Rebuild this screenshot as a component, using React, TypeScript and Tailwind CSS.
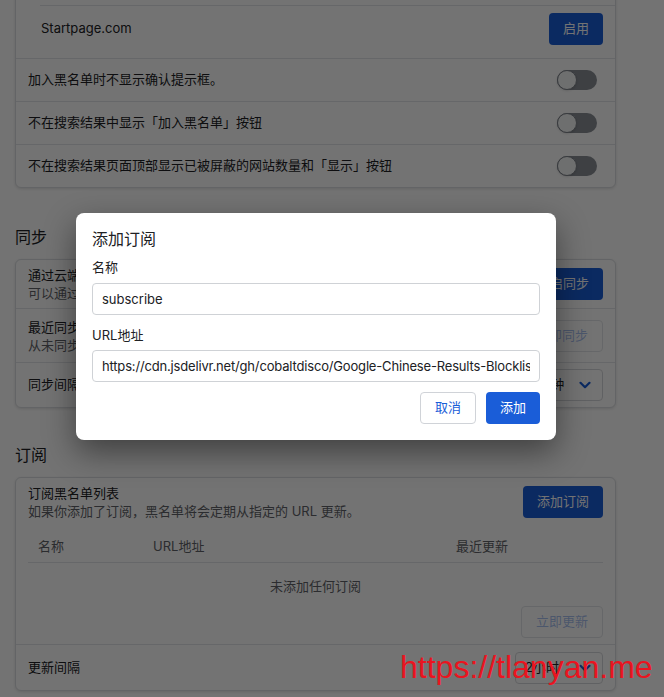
import clsx from "clsx";
import type { ReactNode } from "react";

const BLUE = "bg-[#1a5dd8]";

function Button({
  children,
  variant = "primary",
  className,
}: {
  children: ReactNode;
  variant?: "primary" | "outline" | "disabled";
  className?: string;
}) {
  return (
    <button
      className={clsx(
        "flex h-8 shrink-0 items-center justify-center rounded-[4px] px-3.5 text-[13px]",
        variant === "primary" && [BLUE, "text-white"],
        variant === "outline" &&
          "border border-[#d0d3d8] bg-white text-[#1a5dd8]",
        variant === "disabled" &&
          "border border-[#e3e5e8] bg-white text-[#1a5dd8]/40",
        className,
      )}
    >
      {children}
    </button>
  );
}

function Toggle() {
  return (
    <span className="relative mr-[6px] inline-flex h-5 w-10 shrink-0 items-center rounded-full bg-[#8a8f96]">
      <span className="absolute left-0 h-5 w-5 rounded-full border border-[#7d828a] bg-[#f4f5f6] shadow" />
    </span>
  );
}

function Select({ value }: { value: string }) {
  return (
    <div className="flex h-8 w-[88px] items-center justify-between rounded-[4px] border border-[#d6d8dc] bg-white pr-[11px] pl-[9px] text-[13px] text-[#202124]">
      <span>{value}</span>
      <svg width="12" height="8" viewBox="0 0 12 8" fill="none">
        <path
          d="M1.5 1.8 6 6.2l4.5-4.4"
          stroke="#1a5dd8"
          strokeWidth="2.2"
          strokeLinecap="round"
          strokeLinejoin="round"
        />
      </svg>
    </div>
  );
}

function Card({ children }: { children: ReactNode }) {
  return (
    <div className="rounded-[6px] border border-[#dcdee2] bg-white shadow-[0_1px_3px_rgba(0,0,0,0.12)]">
      {children}
    </div>
  );
}

function Row({
  children,
  className,
  first = false,
}: {
  children: ReactNode;
  className?: string;
  first?: boolean;
}) {
  return (
    <div
      className={clsx(
        "flex items-center justify-between px-3",
        !first && "border-t border-[#e2e4e8]",
        className,
      )}
    >
      {children}
    </div>
  );
}

function TwoLines({ title, sub }: { title: string; sub: string }) {
  return (
    <div className="flex flex-col text-[13px] leading-[18px]">
      <span className="text-[#202124]">{title}</span>
      <span className="text-[#5f6368]">{sub}</span>
    </div>
  );
}

function Heading({ children, className }: { children: ReactNode; className: string }) {
  return (
    <h2 className={clsx("mb-2.5 text-base leading-6 text-[#202124]", className)}>
      {children}
    </h2>
  );
}

function SettingsPage() {
  return (
    <div className="-mt-[49px] ml-[15px] w-[601px]">
      <Card>
        {/* search engine list, scrolled partly out of view */}
        <div className="ml-6 pb-[7px]">
          <div className="flex h-[53px] items-center justify-between pr-3 pl-px text-[13px] text-[#202124]">
            <span>DuckDuckGo</span>
            <Button>启用</Button>
          </div>
          <div className="flex h-[46px] items-center justify-between border-t border-[#e2e4e8] pr-3 pl-px text-[13px] text-[#202124]">
            <span>Startpage.com</span>
            <Button>启用</Button>
          </div>
        </div>
        <Row className="h-[43px] text-[13px] text-[#202124]">
          <span>加入黑名单时不显示确认提示框。</span>
          <Toggle />
        </Row>
        <Row className="h-[43px] text-[13px] text-[#202124]">
          <span>不在搜索结果中显示「加入黑名单」按钮</span>
          <Toggle />
        </Row>
        <Row className="h-[43px] text-[13px] text-[#202124]">
          <span>不在搜索结果页面顶部显示已被屏蔽的网站数量和「显示」按钮</span>
          <Toggle />
        </Row>
      </Card>

      <Heading className="mt-[37px]">同步</Heading>
      <Card>
        <Row first className="h-[48px]">
          <TwoLines
            title="通过云端同步黑名单"
            sub="可以通过云端服务在多个设备之间同步黑名单。"
          />
          <Button>开启同步</Button>
        </Row>
        <Row className="h-[54px]">
          <TwoLines title="最近同步" sub="从未同步" />
          <Button variant="disabled">立即同步</Button>
        </Row>
        <Row className="h-[45px] text-[13px] text-[#202124]">
          <span>同步间隔</span>
          <Select value="15分钟" />
        </Row>
      </Card>

      <Heading className="mt-[35px]">订阅</Heading>
      <Card>
        <div className="px-3 pt-[6px] pb-[6px]">
          <div className="flex items-center justify-between">
            <TwoLines
              title="订阅黑名单列表"
              sub="如果你添加了订阅，黑名单将会定期从指定的 URL 更新。"
            />
            <Button>添加订阅</Button>
          </div>
          <div className="mt-3 grid h-[31px] grid-cols-[115px_303px_1fr] items-center border-b border-[#e2e4e8] text-[13px] text-[#5f6368]">
            <span className="pl-2.5">名称</span>
            <span className="pl-2.5">URL地址</span>
            <span className="pl-2.5">最近更新</span>
          </div>
          <div className="h-10 pt-[14px] text-center text-[13px] leading-[18px] text-[#5f6368]">
            未添加任何订阅
          </div>
          <div className="mt-[3px] flex justify-end">
            <Button variant="disabled">立即更新</Button>
          </div>
        </div>
        <Row className="h-[46px] text-[13px] text-[#202124]">
          <span>更新间隔</span>
          <Select value="2小时" />
        </Row>
      </Card>
    </div>
  );
}

function AddSubscriptionDialog() {
  return (
    <div className="absolute top-[213px] left-[76px] w-[480px] rounded-lg bg-white p-4 shadow-[0_12px_32px_rgba(0,0,0,0.45)]">
      <h3 className="text-base leading-5 text-[#202124]">添加订阅</h3>
      <label className="mt-2 block text-[13px] leading-5 text-[#202124]">
        名称
      </label>
      <input
        readOnly
        value="subscribe"
        className="mt-1.5 block h-8 w-full rounded-[4px] border border-[#cfd2d6] px-[9px] text-[13px] text-[#202124] outline-none"
      />
      <label className="mt-[10px] block text-[13px] leading-5 text-[#202124]">
        URL地址
      </label>
      <input
        readOnly
        value="https://cdn.jsdelivr.net/gh/cobaltdisco/Google-Chinese-Results-Blocklist@master/uBlacklist_subscription.txt"
        className="mt-[5px] block h-8 w-full rounded-[4px] border border-[#cfd2d6] px-[9px] text-[13px] tracking-[-0.17px] text-[#202124] outline-none"
      />
      <div className="mt-2.5 flex justify-end gap-2.5">
        <Button variant="outline">取消</Button>
        <Button>添加</Button>
      </div>
    </div>
  );
}

export default function App() {
  return (
    <div className="relative h-[697px] w-full overflow-hidden bg-white font-['Inter','Noto_Sans_CJK_SC',sans-serif]">
      <SettingsPage />
      <div className="absolute inset-0 bg-black/55" />
      <AddSubscriptionDialog />
      <div className="pointer-events-none absolute top-[651px] left-[400px] font-['Liberation_Sans',Arial,sans-serif] text-[32px] leading-none text-[#ea1420]">
        https://tlanyan.me
      </div>
    </div>
  );
}
